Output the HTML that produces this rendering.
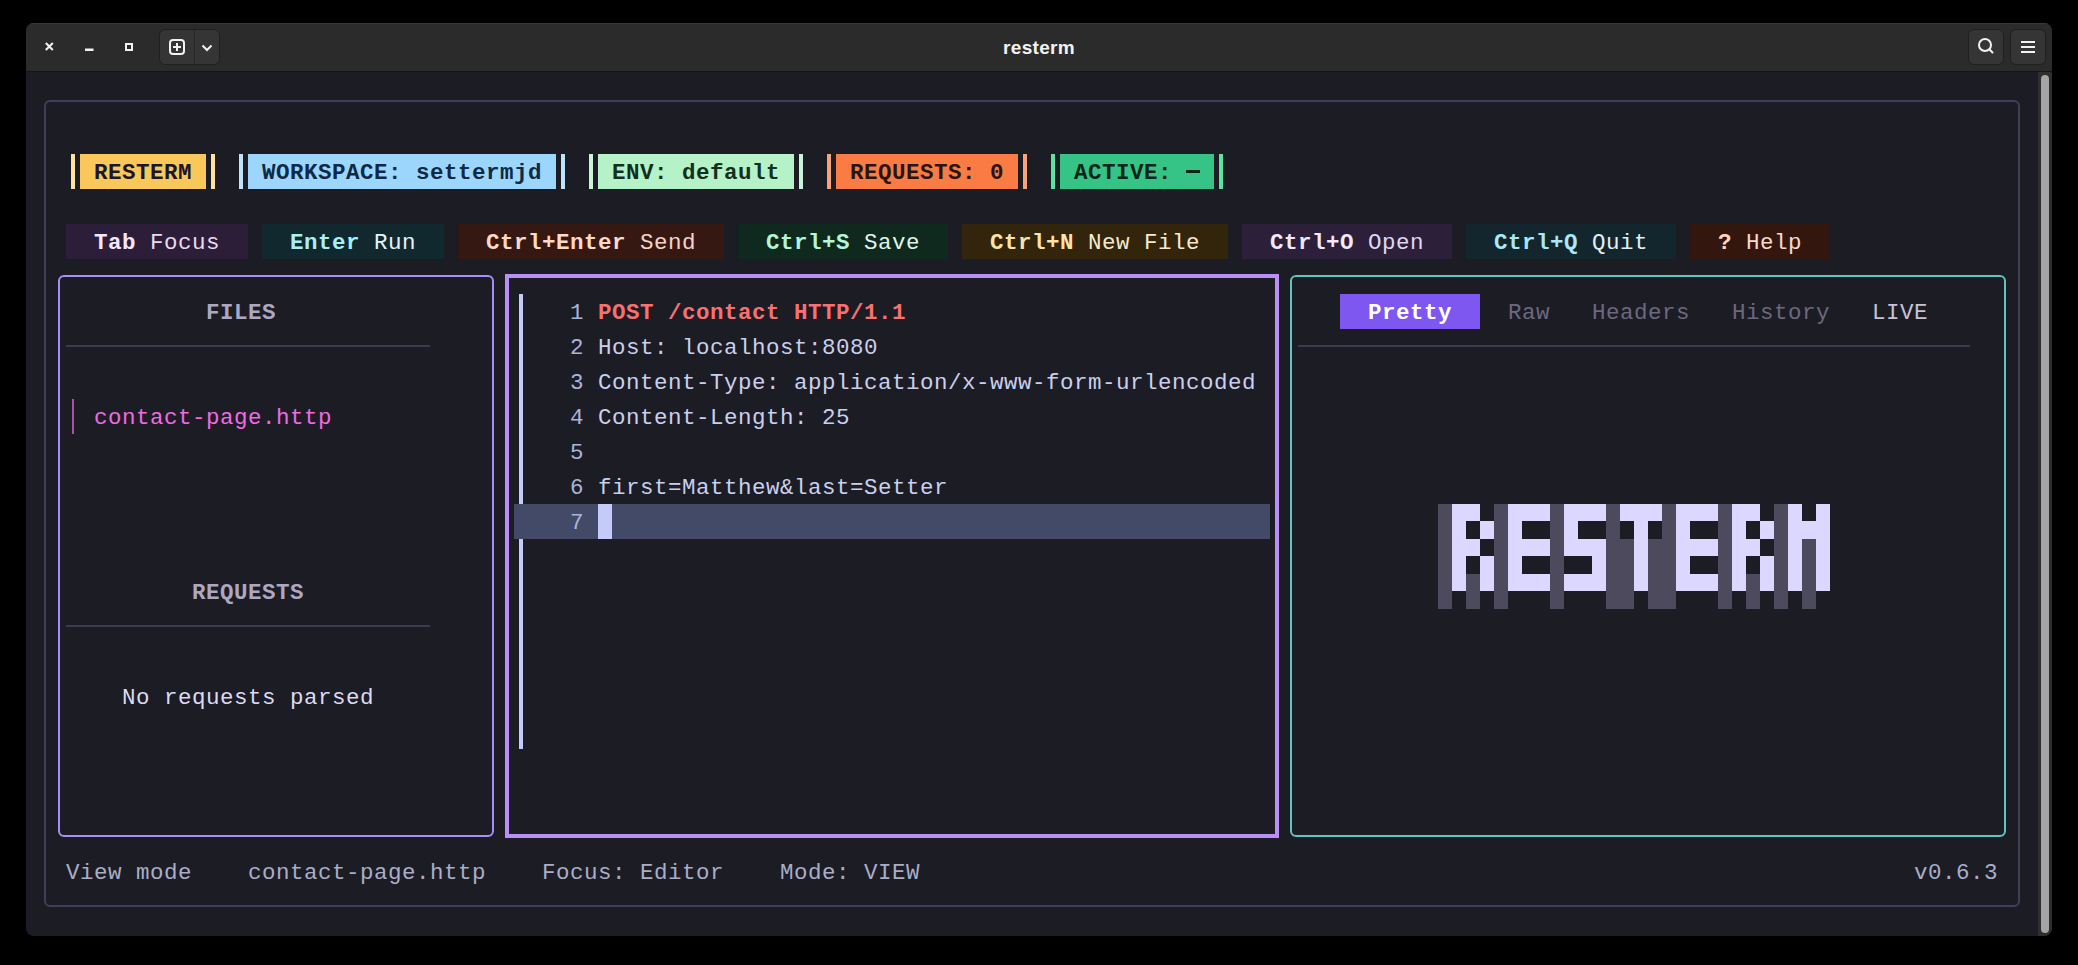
<!DOCTYPE html>
<html><head><meta charset="utf-8"><style>
html,body{margin:0;padding:0}
body{width:2078px;height:965px;background:#000;position:relative;overflow:hidden}
.t{position:absolute;white-space:pre;font-family:"Liberation Mono",monospace;font-size:22.5px;letter-spacing:0.498px;line-height:35px;height:35px}
</style></head><body>
<div style="position:absolute;left:26px;top:23px;width:2026px;height:913px;border-radius:8px;overflow:hidden;background:#1c1c25">
<div style="position:absolute;left:0;top:0;width:2026px;height:48px;background:#2b2b2b;border-top:1px solid #383838;box-sizing:border-box"></div>
<div style="position:absolute;left:0;top:48px;width:2026px;height:1px;background:#151515"></div>
<div style="position:absolute;left:2012px;top:49px;width:14px;height:864px;background:#2e2e2e"></div>
<div style="position:absolute;left:2015px;top:52px;width:8px;height:858px;background:#a4a4a4;border-radius:4px"></div>
</div>
<svg style="position:absolute;left:0;top:0" width="2078" height="80">
<g stroke="#f2f2f2" stroke-width="2" fill="none">
<path d="M45.8 43 L52.8 50 M52.8 43 L45.8 50"/>
</g>
<rect x="85" y="48.5" width="8.5" height="2.5" fill="#f2f2f2"/>
<rect x="126" y="44" width="6" height="6" stroke="#f2f2f2" stroke-width="2" fill="none"/>
<rect x="159.5" y="29.5" width="60" height="35" rx="5.5" fill="#353535" stroke="#1f1f1f" stroke-width="1"/>
<rect x="194" y="30" width="1" height="34" fill="#262626"/>
<rect x="170" y="40" width="14" height="14" rx="3" stroke="#f2f2f2" stroke-width="2" fill="none"/>
<path d="M173 47 H181 M177 43 V51" stroke="#f2f2f2" stroke-width="2"/>
<path d="M202.5 45.5 L207 50 L211.5 45.5" stroke="#f2f2f2" stroke-width="2" fill="none"/>
<rect x="1968.5" y="29.5" width="35" height="35" rx="5.5" fill="#353535" stroke="#1f1f1f" stroke-width="1"/>
<rect x="2010.5" y="29.5" width="35" height="35" rx="5.5" fill="#353535" stroke="#1f1f1f" stroke-width="1"/>
<circle cx="1985" cy="45" r="6" stroke="#f2f2f2" stroke-width="2" fill="none"/>
<path d="M1989.5 49.5 L1992.5 52.5" stroke="#f2f2f2" stroke-width="2" stroke-linecap="round"/>
<path d="M2021 42 H2035 M2021 47 H2035 M2021 52 H2035" stroke="#f2f2f2" stroke-width="2"/>
</svg>
<div style="position:absolute;left:939px;top:35px;width:200px;text-align:center;letter-spacing:0.3px;font:bold 19px/26px 'Liberation Sans',sans-serif;color:#f2f2f2">resterm</div>
<div style="position:absolute;left:44px;top:100px;width:1976px;height:807px;box-sizing:border-box;border:2px solid #453c5c;border-radius:6px"></div>
<div style="position:absolute;left:71px;top:154px;width:4px;height:35px;background:#ffe29c;"></div>
<div style="position:absolute;left:80px;top:154px;width:126px;height:35px;background:#fac85a;"></div>
<div style="position:absolute;left:211px;top:154px;width:4px;height:35px;background:#ffe29c;"></div>
<div class="t" style="left:80px;top:155.5px;color:#1c1626;font-weight:bold;"> RESTERM </div>
<div style="position:absolute;left:239px;top:154px;width:4px;height:35px;background:#bfe3fb;"></div>
<div style="position:absolute;left:248px;top:154px;width:308px;height:35px;background:#9dd6fc;"></div>
<div style="position:absolute;left:561px;top:154px;width:4px;height:35px;background:#bfe3fb;"></div>
<div class="t" style="left:248px;top:155.5px;color:#0f2a44;font-weight:bold;"> WORKSPACE: settermjd </div>
<div style="position:absolute;left:589px;top:154px;width:4px;height:35px;background:#c8f5d6;"></div>
<div style="position:absolute;left:598px;top:154px;width:196px;height:35px;background:#b5f2c8;"></div>
<div style="position:absolute;left:799px;top:154px;width:4px;height:35px;background:#c8f5d6;"></div>
<div class="t" style="left:598px;top:155.5px;color:#12301c;font-weight:bold;"> ENV: default </div>
<div style="position:absolute;left:827px;top:154px;width:4px;height:35px;background:#f9a37a;"></div>
<div style="position:absolute;left:836px;top:154px;width:182px;height:35px;background:#fb7b45;"></div>
<div style="position:absolute;left:1023px;top:154px;width:4px;height:35px;background:#f9a37a;"></div>
<div class="t" style="left:836px;top:155.5px;color:#2a1510;font-weight:bold;"> REQUESTS: 0 </div>
<div style="position:absolute;left:1051px;top:154px;width:4px;height:35px;background:#5ee2a0;"></div>
<div style="position:absolute;left:1060px;top:154px;width:154px;height:35px;background:#35c486;"></div>
<div style="position:absolute;left:1219px;top:154px;width:4px;height:35px;background:#5ee2a0;"></div>
<div class="t" style="left:1060px;top:155.5px;color:#0b2618;font-weight:bold;"> ACTIVE:   </div>
<div style="position:absolute;left:1186px;top:170px;width:13.5px;height:3px;background:#0b2618;"></div>
<div style="position:absolute;left:66px;top:224px;width:182px;height:35px;background:#2c1d38;"></div>
<div class="t" style="left:94px;top:225.5px;color:#f5e6ff;font-weight:bold;">Tab</div>
<div class="t" style="left:150px;top:225.5px;color:#e6dcef;">Focus</div>
<div style="position:absolute;left:262px;top:224px;width:182px;height:35px;background:#10282e;"></div>
<div class="t" style="left:290px;top:225.5px;color:#a6f0f7;font-weight:bold;">Enter</div>
<div class="t" style="left:374px;top:225.5px;color:#e0f4f6;">Run</div>
<div style="position:absolute;left:458px;top:224px;width:266px;height:35px;background:#351812;"></div>
<div class="t" style="left:486px;top:225.5px;color:#ffd9c4;font-weight:bold;">Ctrl+Enter</div>
<div class="t" style="left:640px;top:225.5px;color:#f5d5c8;">Send</div>
<div style="position:absolute;left:738px;top:224px;width:210px;height:35px;background:#10291f;"></div>
<div class="t" style="left:766px;top:225.5px;color:#b2f5d9;font-weight:bold;">Ctrl+S</div>
<div class="t" style="left:864px;top:225.5px;color:#dff5ea;">Save</div>
<div style="position:absolute;left:962px;top:224px;width:266px;height:35px;background:#33240c;"></div>
<div class="t" style="left:990px;top:225.5px;color:#f9e3a8;font-weight:bold;">Ctrl+N</div>
<div class="t" style="left:1088px;top:225.5px;color:#f5ead0;">New File</div>
<div style="position:absolute;left:1242px;top:224px;width:210px;height:35px;background:#2b1f3a;"></div>
<div class="t" style="left:1270px;top:225.5px;color:#f3e8ff;font-weight:bold;">Ctrl+O</div>
<div class="t" style="left:1368px;top:225.5px;color:#e0d8f0;">Open</div>
<div style="position:absolute;left:1466px;top:224px;width:210px;height:35px;background:#13262e;"></div>
<div class="t" style="left:1494px;top:225.5px;color:#a8e8fa;font-weight:bold;">Ctrl+Q</div>
<div class="t" style="left:1592px;top:225.5px;color:#e0f0f5;">Quit</div>
<div style="position:absolute;left:1690px;top:224px;width:140px;height:35px;background:#33170f;"></div>
<div class="t" style="left:1718px;top:225.5px;color:#ffd6c0;font-weight:bold;">?</div>
<div class="t" style="left:1746px;top:225.5px;color:#f8d9cc;">Help</div>
<div style="position:absolute;left:58px;top:275px;width:436px;height:562px;box-sizing:border-box;border:2px solid #a98cf5;border-radius:6px"></div>
<div style="position:absolute;left:505px;top:274px;width:774px;height:564px;box-sizing:border-box;border:4px solid #b78ff7"></div>
<div style="position:absolute;left:1290px;top:275px;width:716px;height:562px;box-sizing:border-box;border:2px solid #62c4c0;border-radius:6px"></div>
<div class="t" style="left:206px;top:295.5px;color:#aca8c2;font-weight:bold;">FILES</div>
<div style="position:absolute;left:66px;top:345px;width:364px;height:2px;background:#403850;"></div>
<div style="position:absolute;left:72px;top:399px;width:2px;height:35px;background:#b04fa8;"></div>
<div class="t" style="left:94px;top:400.5px;color:#f06ae4;">contact-page.http</div>
<div class="t" style="left:192px;top:575.5px;color:#aca8c2;font-weight:bold;">REQUESTS</div>
<div style="position:absolute;left:66px;top:625px;width:364px;height:2px;background:#403850;"></div>
<div class="t" style="left:122px;top:680.5px;color:#dcdaf0;">No requests parsed</div>
<div style="position:absolute;left:519px;top:294px;width:4px;height:455px;background:#c5cbf8;"></div>
<div style="position:absolute;left:514px;top:504px;width:756px;height:35px;background:#434a68;"></div>
<div style="position:absolute;left:598px;top:504px;width:14px;height:35px;background:#c5cbf8;"></div>
<div class="t" style="left:570px;top:295.5px;color:#aab4d8;">1</div>
<div class="t" style="left:570px;top:330.5px;color:#aab4d8;">2</div>
<div class="t" style="left:570px;top:365.5px;color:#aab4d8;">3</div>
<div class="t" style="left:570px;top:400.5px;color:#aab4d8;">4</div>
<div class="t" style="left:570px;top:435.5px;color:#aab4d8;">5</div>
<div class="t" style="left:570px;top:470.5px;color:#aab4d8;">6</div>
<div class="t" style="left:570px;top:505.5px;color:#aab4d8;">7</div>
<div class="t" style="left:598px;top:295.5px;color:#f87171;font-weight:bold;">POST /contact HTTP/1.1</div>
<div class="t" style="left:598px;top:330.5px;color:#c8d0ee;">Host: localhost:8080</div>
<div class="t" style="left:598px;top:365.5px;color:#c8d0ee;">Content-Type: application/x-www-form-urlencoded</div>
<div class="t" style="left:598px;top:400.5px;color:#c8d0ee;">Content-Length: 25</div>
<div class="t" style="left:598px;top:470.5px;color:#c8d0ee;">first=Matthew&amp;last=Setter</div>
<div style="position:absolute;left:1340px;top:294px;width:140px;height:35px;background:#7d57f0;"></div>
<div class="t" style="left:1368px;top:295.5px;color:#ffffff;font-weight:bold;">Pretty</div>
<div class="t" style="left:1508px;top:295.5px;color:#6b6880;">Raw</div>
<div class="t" style="left:1592px;top:295.5px;color:#6b6880;">Headers</div>
<div class="t" style="left:1732px;top:295.5px;color:#6b6880;">History</div>
<div class="t" style="left:1872px;top:295.5px;color:#c5c3d5;">LIVE</div>
<div style="position:absolute;left:1298px;top:345px;width:672px;height:2px;background:#403850;"></div>
<svg style="position:absolute;left:1438px;top:504px" width="392" height="105" shape-rendering="crispEdges"><rect x="0" y="0" width="14" height="105" fill="#4d4a5e"/><rect x="14" y="0" width="14" height="87" fill="#dcd7fe"/><rect x="28" y="0" width="14" height="17" fill="#dcd7fe"/><rect x="28" y="35" width="14" height="17" fill="#dcd7fe"/><rect x="28" y="70" width="14" height="35" fill="#4d4a5e"/><rect x="42" y="17" width="14" height="18" fill="#dcd7fe"/><rect x="42" y="52" width="14" height="35" fill="#dcd7fe"/><rect x="56" y="0" width="14" height="105" fill="#4d4a5e"/><rect x="70" y="0" width="14" height="87" fill="#dcd7fe"/><rect x="84" y="0" width="14" height="17" fill="#dcd7fe"/><rect x="84" y="35" width="14" height="17" fill="#dcd7fe"/><rect x="84" y="70" width="14" height="17" fill="#dcd7fe"/><rect x="98" y="0" width="14" height="17" fill="#dcd7fe"/><rect x="98" y="35" width="14" height="17" fill="#dcd7fe"/><rect x="98" y="70" width="14" height="17" fill="#dcd7fe"/><rect x="112" y="0" width="14" height="105" fill="#4d4a5e"/><rect x="126" y="0" width="14" height="52" fill="#dcd7fe"/><rect x="126" y="70" width="14" height="17" fill="#dcd7fe"/><rect x="140" y="0" width="14" height="17" fill="#dcd7fe"/><rect x="140" y="35" width="14" height="17" fill="#dcd7fe"/><rect x="140" y="70" width="14" height="17" fill="#dcd7fe"/><rect x="154" y="0" width="14" height="17" fill="#dcd7fe"/><rect x="154" y="35" width="14" height="52" fill="#dcd7fe"/><rect x="168" y="0" width="14" height="105" fill="#4d4a5e"/><rect x="182" y="0" width="14" height="17" fill="#dcd7fe"/><rect x="182" y="35" width="14" height="70" fill="#4d4a5e"/><rect x="196" y="0" width="14" height="87" fill="#dcd7fe"/><rect x="210" y="0" width="14" height="17" fill="#dcd7fe"/><rect x="210" y="35" width="14" height="70" fill="#4d4a5e"/><rect x="224" y="0" width="14" height="105" fill="#4d4a5e"/><rect x="238" y="0" width="14" height="87" fill="#dcd7fe"/><rect x="252" y="0" width="14" height="17" fill="#dcd7fe"/><rect x="252" y="35" width="14" height="17" fill="#dcd7fe"/><rect x="252" y="70" width="14" height="17" fill="#dcd7fe"/><rect x="266" y="0" width="14" height="17" fill="#dcd7fe"/><rect x="266" y="35" width="14" height="17" fill="#dcd7fe"/><rect x="266" y="70" width="14" height="17" fill="#dcd7fe"/><rect x="280" y="0" width="14" height="105" fill="#4d4a5e"/><rect x="294" y="0" width="14" height="87" fill="#dcd7fe"/><rect x="308" y="0" width="14" height="17" fill="#dcd7fe"/><rect x="308" y="35" width="14" height="17" fill="#dcd7fe"/><rect x="308" y="70" width="14" height="35" fill="#4d4a5e"/><rect x="322" y="17" width="14" height="18" fill="#dcd7fe"/><rect x="322" y="52" width="14" height="35" fill="#dcd7fe"/><rect x="336" y="0" width="14" height="105" fill="#4d4a5e"/><rect x="350" y="0" width="14" height="87" fill="#dcd7fe"/><rect x="364" y="17" width="14" height="18" fill="#dcd7fe"/><rect x="364" y="35" width="14" height="70" fill="#4d4a5e"/><rect x="378" y="0" width="14" height="87" fill="#dcd7fe"/></svg>
<div class="t" style="left:66px;top:855.5px;color:#a8aec8;">View mode</div>
<div class="t" style="left:248px;top:855.5px;color:#a8aec8;">contact-page.http</div>
<div class="t" style="left:542px;top:855.5px;color:#a8aec8;">Focus: Editor</div>
<div class="t" style="left:780px;top:855.5px;color:#a8aec8;">Mode: VIEW</div>
<div class="t" style="left:1914px;top:855.5px;color:#a8aec8;">v0.6.3</div>
</body></html>
